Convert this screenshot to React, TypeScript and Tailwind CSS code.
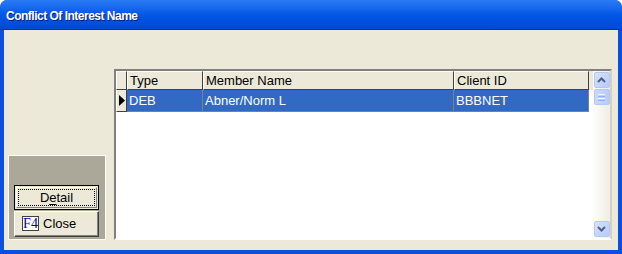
import React from "react"

const COLS = [
  { key: "type", label: "Type", width: "w-[76px]" },
  { key: "member", label: "Member Name", width: "w-[251px]" },
  { key: "client", label: "Client ID", width: "w-[135px]" },
]

const ROWS = [{ type: "DEB", member: "Abner/Norm L", client: "BBBNET" }]

function Chevron({ up }: { up?: boolean }) {
  return (
    <svg width="9" height="6" viewBox="0 0 9 6">
      <path
        d={up ? "M1 5 L4.5 1.5 L8 5" : "M1 1 L4.5 4.5 L8 1"}
        fill="none"
        stroke="#4D6185"
        strokeWidth="2"
      />
    </svg>
  )
}

function ScrollButton({ up }: { up?: boolean }) {
  return (
    <div className="h-[16px] w-[16px] rounded-[2px] border border-[#B4C8F6] bg-gradient-to-br from-[#D6E2FD] to-[#B7CBF8] flex items-center justify-center">
      <Chevron up={up} />
    </div>
  )
}

function ScrollBar() {
  return (
    <div className="w-[17px] h-full bg-gradient-to-r from-[#FDFDFA] to-[#EFEDE4] flex flex-col justify-between py-[1px] items-center">
      <div className="flex flex-col gap-[1px]">
        <ScrollButton up />
        {/* thumb */}
        <div className="h-[16px] w-[16px] rounded-[2px] border border-[#B4C8F6] bg-gradient-to-r from-[#C9D8FC] to-[#B9CCF9] flex flex-col items-center justify-center gap-[1px]">
          <div className="h-[1px] w-[7px] bg-[#EEF4FE]" />
          <div className="h-[1px] w-[7px] bg-[#8CB0F8]" />
          <div className="h-[1px] w-[7px] bg-[#EEF4FE]" />
          <div className="h-[1px] w-[7px] bg-[#8CB0F8]" />
        </div>
      </div>
      <ScrollButton />
    </div>
  )
}

function Grid() {
  return (
    <div className="w-[498px] h-[171px] border-2 border-t-[#808080] border-l-[#808080] border-b-white border-r-[#D4D0C8] flex">
      <div className="flex-1 bg-white">
        {/* header */}
        <div className="flex h-[19px] bg-[#ECE9D8]">
          <div className="w-[11px] border-l border-t border-white border-r border-r-[#404040] border-b border-b-[#404040]" />
          {COLS.map((c) => (
            <div
              key={c.key}
              className={`${c.width} border-l border-t border-white border-r border-r-[#404040] border-b border-b-[#404040] pl-[2px] leading-[17px] text-black`}
            >
              {c.label}
            </div>
          ))}
        </div>
        {ROWS.map((r) => (
          <div key={r.client} className="flex h-[22px]">
            <div className="w-[11px] bg-[#ECE9D8] border-r border-b border-[#404040] border-l border-l-white flex items-center justify-center">
              <svg width="6" height="11" viewBox="0 0 6 11">
                <path d="M0 0 L6 5.5 L0 11 Z" fill="#000" />
              </svg>
            </div>
            {COLS.map((c) => (
              <div
                key={c.key}
                className={`${c.width} bg-[#316AC5] text-white border-r border-b border-[#808080] pl-[2px] leading-[21px]`}
              >
                {r[c.key as keyof typeof r]}
              </div>
            ))}
          </div>
        ))}
      </div>
      <ScrollBar />
    </div>
  )
}

function SideButtons() {
  return (
    <div className="w-[98px] h-[85px] bg-[#ACA899] border border-white flex flex-col justify-end pl-[5px] pb-[2px] gap-[1px]">
      <div className="w-[85px] h-[25px] border border-black bg-[#ECE9D8] p-[1px]">
        <div className="h-full border border-t-white border-l-white border-b-[#808080] border-r-[#808080] p-[1px]">
          <div className="h-full border border-dotted border-black flex items-center justify-center leading-none">
            D<span className="underline underline-offset-2">e</span>tail
          </div>
        </div>
      </div>
      <div className="w-[85px] h-[26px] border border-t-white border-l-white border-b-[#404040] border-r-[#404040] bg-[#ECE9D8]">
        <div className="h-full border-b border-r border-[#808080] flex items-center pl-[7px] gap-[4px]">
          <span className="w-[17px] h-[15px] bg-white border border-[#404040] text-[#0000A8] text-[14px] leading-[13px] text-center [font-family:'Liberation_Serif',serif]">
            F4
          </span>
          <span>Close</span>
        </div>
      </div>
    </div>
  )
}

export default function App() {
  return (
    <div className="w-[622px] h-[254px] bg-[#0A4FDF] rounded-t-[7px] flex flex-col overflow-hidden text-[13px] [font-family:'Liberation_Sans',Arial,sans-serif]">
      <div className="h-[30px] shrink-0 bg-gradient-to-b from-[#2A7BF5] via-[#0457E6] to-[#0049D7] border-b border-[#0831B0] flex items-center pl-[6px] pt-[2px] rounded-t-[7px]">
        <span className="text-white font-bold text-[12px] tracking-[-0.5px] [text-shadow:1px_1px_0_#0A1883]">
          Conflict Of Interest Name
        </span>
      </div>
      <div className="flex-1 mx-[4px] mb-[4px] bg-[#ECE9D8] flex items-end pl-[4px] pb-[10px] gap-[8px]">
        <SideButtons />
        <Grid />
      </div>
    </div>
  )
}
